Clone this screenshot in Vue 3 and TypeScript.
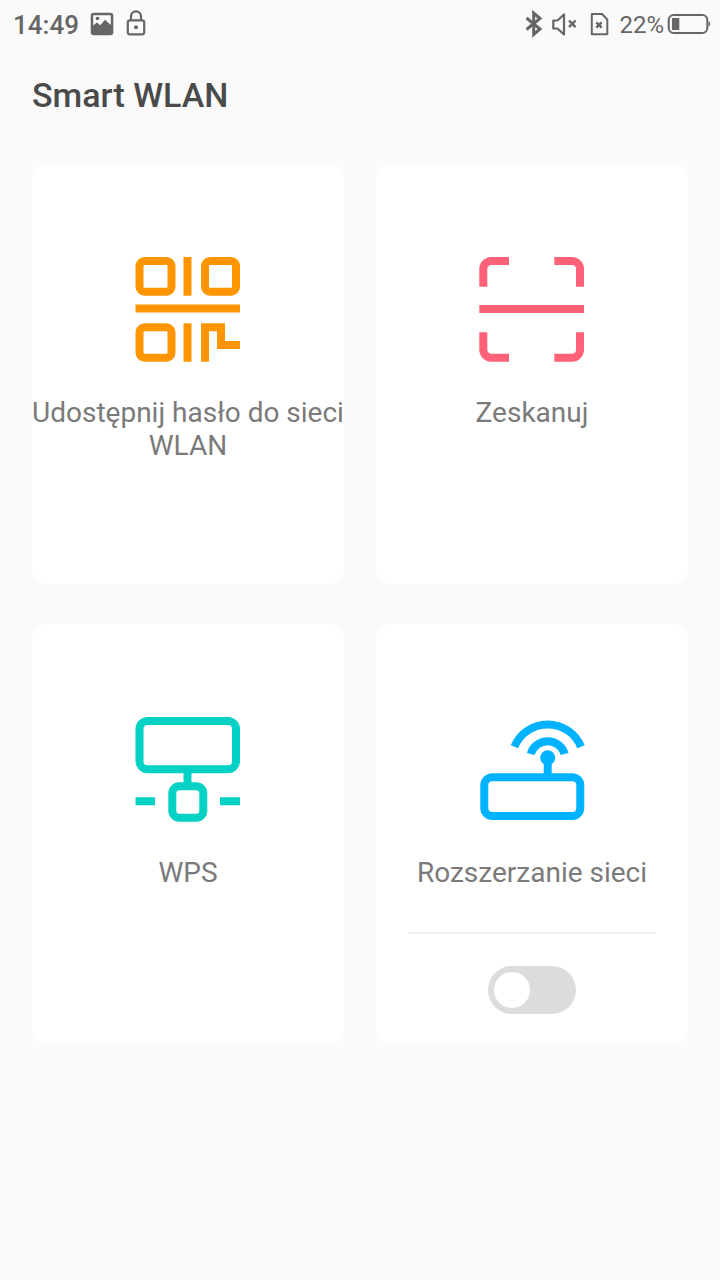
<script setup lang="ts">
const orange = '#ff9500'
</script>

<template>
  <div class="page">
    <header class="status">
      <div class="status-left">
        <span class="time">14:49</span>
        <svg class="ic-image" width="24" height="30" viewBox="0 0 24 30">
          <rect x="0.7" y="2.7" width="22.6" height="22.6" rx="3" fill="#666" />
          <path d="M3.2 5.2 H20.8 V15 L15 9.8 L10.3 15.3 L6.8 12.5 L3.2 15.5 Z" fill="#fafafa" />
          <circle cx="7.5" cy="8.5" r="1.8" fill="#666" />
        </svg>
        <svg class="ic-lock" width="20" height="30" viewBox="0 0 20 30">
          <rect x="1.8" y="10.3" width="16.4" height="14" rx="2" fill="none" stroke="#666" stroke-width="2.2" />
          <path d="M5 10 V6.3 a5 5 0 0 1 10 0 V10" fill="none" stroke="#666" stroke-width="2.2" />
          <circle cx="10" cy="17.3" r="2" fill="#666" />
        </svg>
      </div>
      <div class="status-right">
        <svg width="18" height="30" viewBox="0 0 18 30">
          <path d="M1.5 8 L15 19 L8.7 24.5 V3 L15 8.5 L1.5 19.5" fill="none" stroke="#666" stroke-width="3" />
        </svg>
        <svg class="ic-mute" width="25" height="30" viewBox="0 0 25 30">
          <path d="M1.3 10.5 H5.5 L12 4.5 V24.5 L5.5 18.5 H1.3 Z" fill="none" stroke="#666" stroke-width="2.2" stroke-linejoin="round" />
          <path d="M17 10.5 L23.6 17.2 M23.6 10.5 L17 17.2" stroke="#666" stroke-width="2.4" />
        </svg>
        <svg class="ic-sim" width="19" height="30" viewBox="0 0 19 30">
          <path d="M1.8 4 H12 L17.3 9.5 V24.3 H1.8 Z" fill="none" stroke="#666" stroke-width="2" stroke-linejoin="round" />
          <path d="M6.3 12.3 L11.7 17.7 M11.7 12.3 L6.3 17.7" stroke="#666" stroke-width="2.4" />
        </svg>
        <span class="pct">22%</span>
        <svg class="ic-batt" width="44" height="30" viewBox="0 0 44 30">
          <rect x="1.7" y="5" width="38.6" height="18" rx="5" fill="none" stroke="#666" stroke-width="2" />
          <rect x="5" y="8" width="7.3" height="12" fill="#666" />
          <path d="M41.6 11.3 a3 3 0 0 1 0 5.4 Z" fill="#666" />
        </svg>
      </div>
    </header>

    <h1 class="title">Smart WLAN</h1>

    <main class="grid">
      <section class="card">
        <svg class="icon" width="120" height="120" viewBox="0 0 120 120" fill="none" :stroke="orange" stroke-width="8">
          <rect x="11.5" y="11" width="32" height="30.7" rx="5" />
          <path d="M59.5 7 V45.7" />
          <rect x="77" y="11" width="31" height="30.7" rx="5" />
          <path d="M7.5 58.5 H112" />
          <rect x="11.5" y="77.3" width="32" height="30.4" rx="5" />
          <path d="M59.5 73.3 V111.7" />
          <path d="M77 111.7 V77.3 H93 V95 H112" />
        </svg>
        <p class="label">Udostępnij hasło do sieci WLAN</p>
      </section>

      <section class="card">
        <svg class="icon" width="120" height="120" viewBox="0 0 120 120" fill="none" stroke="#ff6278" stroke-width="8">
          <path d="M11.3 36.7 V19 a8 8 0 0 1 8-8 H37" />
          <path d="M82.3 11 H100 a8 8 0 0 1 8 8 V36.7" />
          <path d="M7.3 59 H112" />
          <path d="M11.3 82.3 V99.7 a8 8 0 0 0 8 8 H37" />
          <path d="M82.3 107.7 H100 a8 8 0 0 0 8-8 V82.3" />
        </svg>
        <p class="label">Zeskanuj</p>
      </section>

      <section class="card">
        <svg class="icon" width="120" height="120" viewBox="0 0 120 120" fill="none" stroke="#05d1c4" stroke-width="8">
          <rect x="11.5" y="11" width="96.5" height="48.3" rx="8" />
          <path d="M59.5 60 V73" />
          <rect x="44.3" y="76.3" width="31" height="31.4" rx="7" />
          <path d="M7.5 91.3 H27 M92 91.3 H112" />
        </svg>
        <p class="label">WPS</p>
      </section>

      <section class="card">
        <svg class="icon" width="120" height="120" viewBox="0 0 120 120" fill="none" stroke="#00b2ff" stroke-width="8">
          <rect x="12.3" y="67.3" width="96" height="38.7" rx="8" />
          <path d="M75.7 48 V64" />
          <circle cx="75.7" cy="47.7" r="7.5" fill="#00b2ff" stroke="none" />
          <path d="M42.4 36.7 A36 36 0 0 1 109 36.7" />
          <path d="M58.7 44 A17.7 17.7 0 0 1 92.7 44" />
        </svg>
        <p class="label">Rozszerzanie sieci</p>
        <div class="footer">
          <div class="toggle"><span class="knob"></span></div>
        </div>
      </section>
    </main>
  </div>
</template>

<style>
html, body { margin: 0; background: #fafafa; }
</style>

<style scoped>
.page {
  width: 720px;
  height: 1280px;
  background: #fafafa;
  font-family: Roboto, "Liberation Sans", sans-serif;
  overflow: hidden;
}
.status {
  height: 50px;
  display: flex;
  justify-content: space-between;
  align-items: center;
  padding: 0 9px 0 13px;
  box-sizing: border-box;
  color: #666;
}
.status-left, .status-right { display: flex; align-items: center; }
.status svg { display: block; flex: none; }
.time { font-size: 26px; font-weight: 500; line-height: 50px; width: 65px; }
.ic-image { margin-left: 12px; }
.ic-lock { margin-left: 12px; }
.ic-mute { margin-left: 9px; }
.ic-sim { margin-left: 13px; }
.pct { font-size: 24px; margin-left: 10px; line-height: 50px; }
.ic-batt { margin-left: 3px; }
.title {
  margin: 0;
  padding: 25px 32px 0;
  height: 114px;
  box-sizing: border-box;
  font-size: 34px;
  line-height: 40px;
  font-weight: 500;
  color: #4a4a4a;
}
.grid {
  display: grid;
  grid-template-columns: 312px 312px;
  grid-auto-rows: 420px;
  column-gap: 32px;
  row-gap: 40px;
  padding: 0 32px;
}
.card {
  background: #fff;
  border-radius: 14px;
  display: flex;
  flex-direction: column;
  align-items: center;
  padding-top: 86px;
  box-sizing: border-box;
}
.icon { display: block; flex: none; }
.label {
  margin: 26px 0 0;
  font-size: 28px;
  line-height: 33px;
  color: #7a7a7a;
  text-align: center;
  width: 312px;
}
.footer {
  margin-top: auto;
  width: 248px;
  border-top: 2px solid #f0f0f0;
  padding: 32px 0 30px;
  display: flex;
  justify-content: center;
}
.toggle {
  width: 88px;
  height: 48px;
  border-radius: 24px;
  background: #dcdcdc;
  display: flex;
  align-items: center;
  padding-left: 6px;
  box-sizing: border-box;
}
.knob {
  width: 36px;
  height: 36px;
  border-radius: 50%;
  background: #fff;
}
</style>
